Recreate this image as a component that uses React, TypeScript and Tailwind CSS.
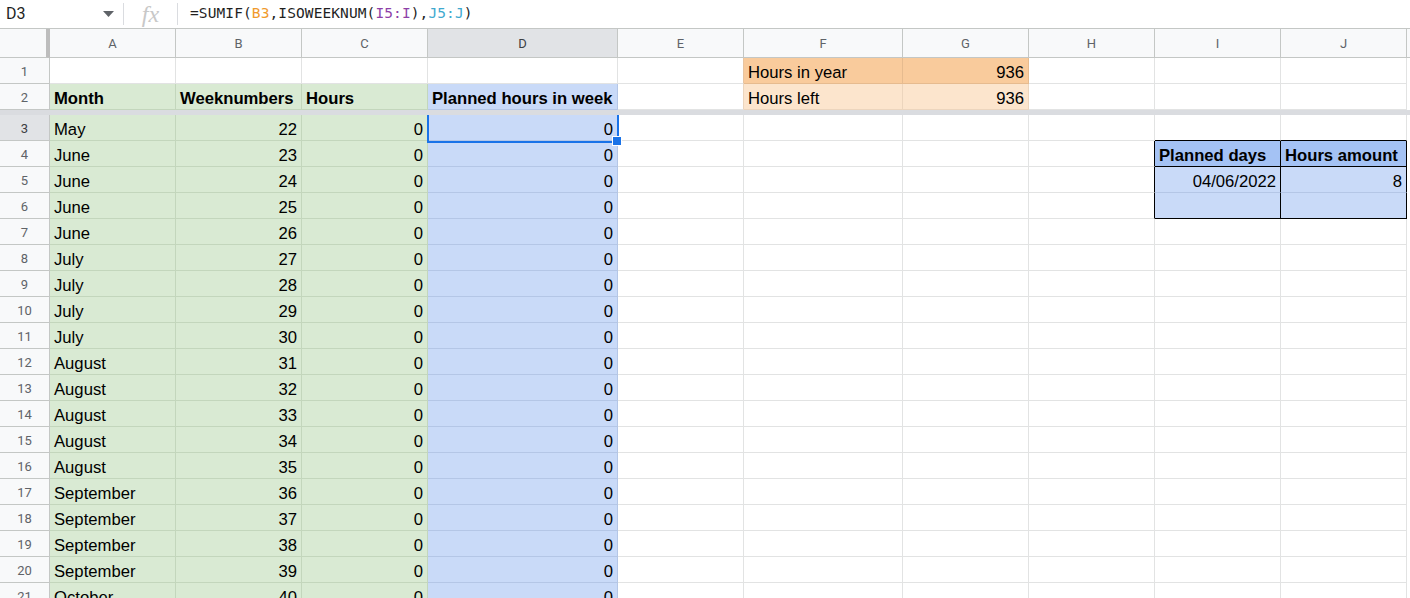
import React from "react";

const COLS = ["A", "B", "C", "D", "E", "F", "G", "H", "I", "J"];
const W = [
  "w-[126px]",
  "w-[126px]",
  "w-[126px]",
  "w-[190px]",
  "w-[126px]",
  "w-[159px]",
  "w-[126px]",
  "w-[126px]",
  "w-[126px]",
  "w-[126px]",
];

const weeks: [string, number][] = [
  ["May", 22],
  ["June", 23],
  ["June", 24],
  ["June", 25],
  ["June", 26],
  ["July", 27],
  ["July", 28],
  ["July", 29],
  ["July", 30],
  ["August", 31],
  ["August", 32],
  ["August", 33],
  ["August", 34],
  ["August", 35],
  ["September", 36],
  ["September", 37],
  ["September", 38],
  ["September", 39],
  ["October", 40],
];

type CellSpec = {
  text?: string | number;
  right?: boolean;
  bold?: boolean;
  cls?: string;
};

const green = "bg-[#d9ead3] border-[#c3d6bc]";
const blue = "bg-[#c9daf8] border-[#b4c6e6]";
const plain = "border-[#e2e3e3]";

function Cell({ spec, col }: { spec: CellSpec; col: number }) {
  return (
    <div
      className={`shrink-0 h-full box-border border-r border-b flex items-center pt-[6px] px-[4px] ${W[col]} ${
        spec.right ? "justify-end" : "justify-start"
      } ${spec.bold ? "font-bold" : ""} ${spec.cls ?? plain}`}
    >
      <span className="whitespace-nowrap leading-none">{spec.text}</span>
    </div>
  );
}

function Row({ num, cells, selected }: { num: number; cells: CellSpec[]; selected?: boolean }) {
  return (
    <div className="flex h-[26px] shrink-0">
      <div
        className={`shrink-0 w-[50px] h-full box-border border-r border-b border-[#c4c7c5] flex items-center justify-center pt-[2px] text-[13px] font-['Roboto',sans-serif] ${
          selected ? "bg-[#e1e3e6] text-[#3c4043]" : "bg-[#f8f9fa] text-[#5f6368]"
        }`}
      >
        {num}
      </div>
      {cells.map((c, i) => (
        <Cell key={i} spec={c} col={i} />
      ))}
    </div>
  );
}

function buildRow(r: number): CellSpec[] {
  const cells: CellSpec[] = COLS.map(() => ({}));
  if (r >= 3) {
    const [m, wk] = weeks[r - 3];
    cells[0] = { text: m, cls: green };
    cells[1] = { text: wk, right: true, cls: green };
    cells[2] = { text: 0, right: true, cls: green };
    cells[3] = { text: 0, right: true, cls: blue };
  }
  if (r === 3) {
    cells[8] = { cls: "border-[#e2e3e3] border-b-black" };
    cells[9] = { cls: "border-[#e2e3e3] border-b-black" };
  }
  if (r >= 4 && r <= 6) {
    cells[7] = { cls: "border-[#e2e3e3] border-r-black" };
  }
  if (r === 4) {
    cells[8] = { text: "Planned days", bold: true, cls: "bg-[#a4c2f4] border-black" };
    cells[9] = { text: "Hours amount", bold: true, cls: "bg-[#a4c2f4] border-black" };
  }
  if (r === 5) {
    cells[8] = { text: "04/06/2022", right: true, cls: "bg-[#c9daf8] border-black border-b-[#b4c6e6]" };
    cells[9] = { text: 8, right: true, cls: "bg-[#c9daf8] border-black border-b-[#b4c6e6]" };
  }
  if (r === 6) {
    cells[8] = { cls: "bg-[#c9daf8] border-black" };
    cells[9] = { cls: "bg-[#c9daf8] border-black" };
  }
  return cells;
}

export default function App() {
  const row1: CellSpec[] = COLS.map(() => ({}));
  row1[4] = { cls: "border-[#e2e3e3] border-r-[#e8c4a0]" };
  row1[5] = { text: "Hours in year", cls: "bg-[#f9cb9c] border-[#e6bb8f]" };
  row1[6] = { text: 936, right: true, cls: "bg-[#f9cb9c] border-[#e6bb8f]" };

  const row2: CellSpec[] = COLS.map(() => ({}));
  row2[0] = { text: "Month", bold: true, cls: green };
  row2[1] = { text: "Weeknumbers", bold: true, cls: green };
  row2[2] = { text: "Hours", bold: true, cls: green };
  row2[3] = { text: "Planned hours in week", bold: true, cls: blue };
  row2[4] = { cls: "border-[#e2e3e3] border-r-[#ecd5bd]" };
  row2[5] = { text: "Hours left", cls: "bg-[#fce5cd] border-[#ecd5bd]" };
  row2[6] = { text: 936, right: true, cls: "bg-[#fce5cd] border-[#ecd5bd]" };

  return (
    <div className="relative w-[1410px] h-[598px] overflow-hidden bg-white text-black font-['Liberation_Sans',Arial,sans-serif] text-[16.67px]">
      {/* Formula bar */}
      <div className="flex items-center h-[29px] border-b border-[#c4c7c5] bg-white">
        <div className="w-[123px] shrink-0 flex items-center justify-between pl-[6px] pr-[9px] text-[16px] font-['Roboto',sans-serif] text-[#1f1f1f]">
          <span>D3</span>
          <svg width="11" height="6" viewBox="0 0 11 6">
            <path d="M0 0 L11 0 L5.5 6 Z" fill="#5f6368" />
          </svg>
        </div>
        <div className="w-px h-[22px] bg-[#dadce0]" />
        <div className="w-[53px] shrink-0 flex justify-center text-[24px] italic text-[#c8c8c8] font-['Liberation_Serif',serif] leading-none">
          fx
        </div>
        <div className="w-px h-[22px] bg-[#dadce0]" />
        <div className="pl-[12px] font-['DejaVu_Sans_Mono',monospace] text-[14.5px] text-[#1f1f1f] tracking-[0.1px]">
          =SUMIF(<span className="text-[#f09a2c]">B3</span>,ISOWEEKNUM(
          <span className="text-[#8e3fa8]">I5:I</span>),<span className="text-[#3fa9cf]">J5:J</span>)
        </div>
      </div>

      {/* Column headers */}
      <div className="flex h-[29px] bg-[#f8f9fa] text-[13px] text-[#5f6368] font-['Roboto',sans-serif]">
        <div className="w-[50px] shrink-0 box-border border-r-4 border-b border-[#c4c7c5] border-r-[#bdbdbd]" />
        {COLS.map((c, i) => (
          <div
            key={c}
            className={`shrink-0 h-full box-border border-r border-b border-[#c4c7c5] flex items-center justify-center pt-[2px] ${W[i]} ${
              c === "D" ? "bg-[#e1e3e6] text-[#3c4043]" : ""
            }`}
          >
            {c}
          </div>
        ))}
        <div className="flex-1 border-b border-[#c4c7c5]" />
      </div>

      <Row num={1} cells={row1} />
      <Row num={2} cells={row2} />

      {/* Frozen rows divider */}
      <div className="h-[5px] bg-[#dadce0]" />

      {weeks.map((_, idx) => {
        const r = idx + 3;
        return <Row key={r} num={r} cells={buildRow(r)} selected={r === 3} />;
      })}

      {/* Active cell selection D3 */}
      <div className="absolute left-[427px] top-[115px] w-[192px] h-[28px] border-2 border-t-0 border-[#1a73e8] pointer-events-none" />
      <div className="absolute left-[612px] top-[136px] w-[10px] h-[10px] bg-[#1a73e8] border border-white" />
    </div>
  );
}
